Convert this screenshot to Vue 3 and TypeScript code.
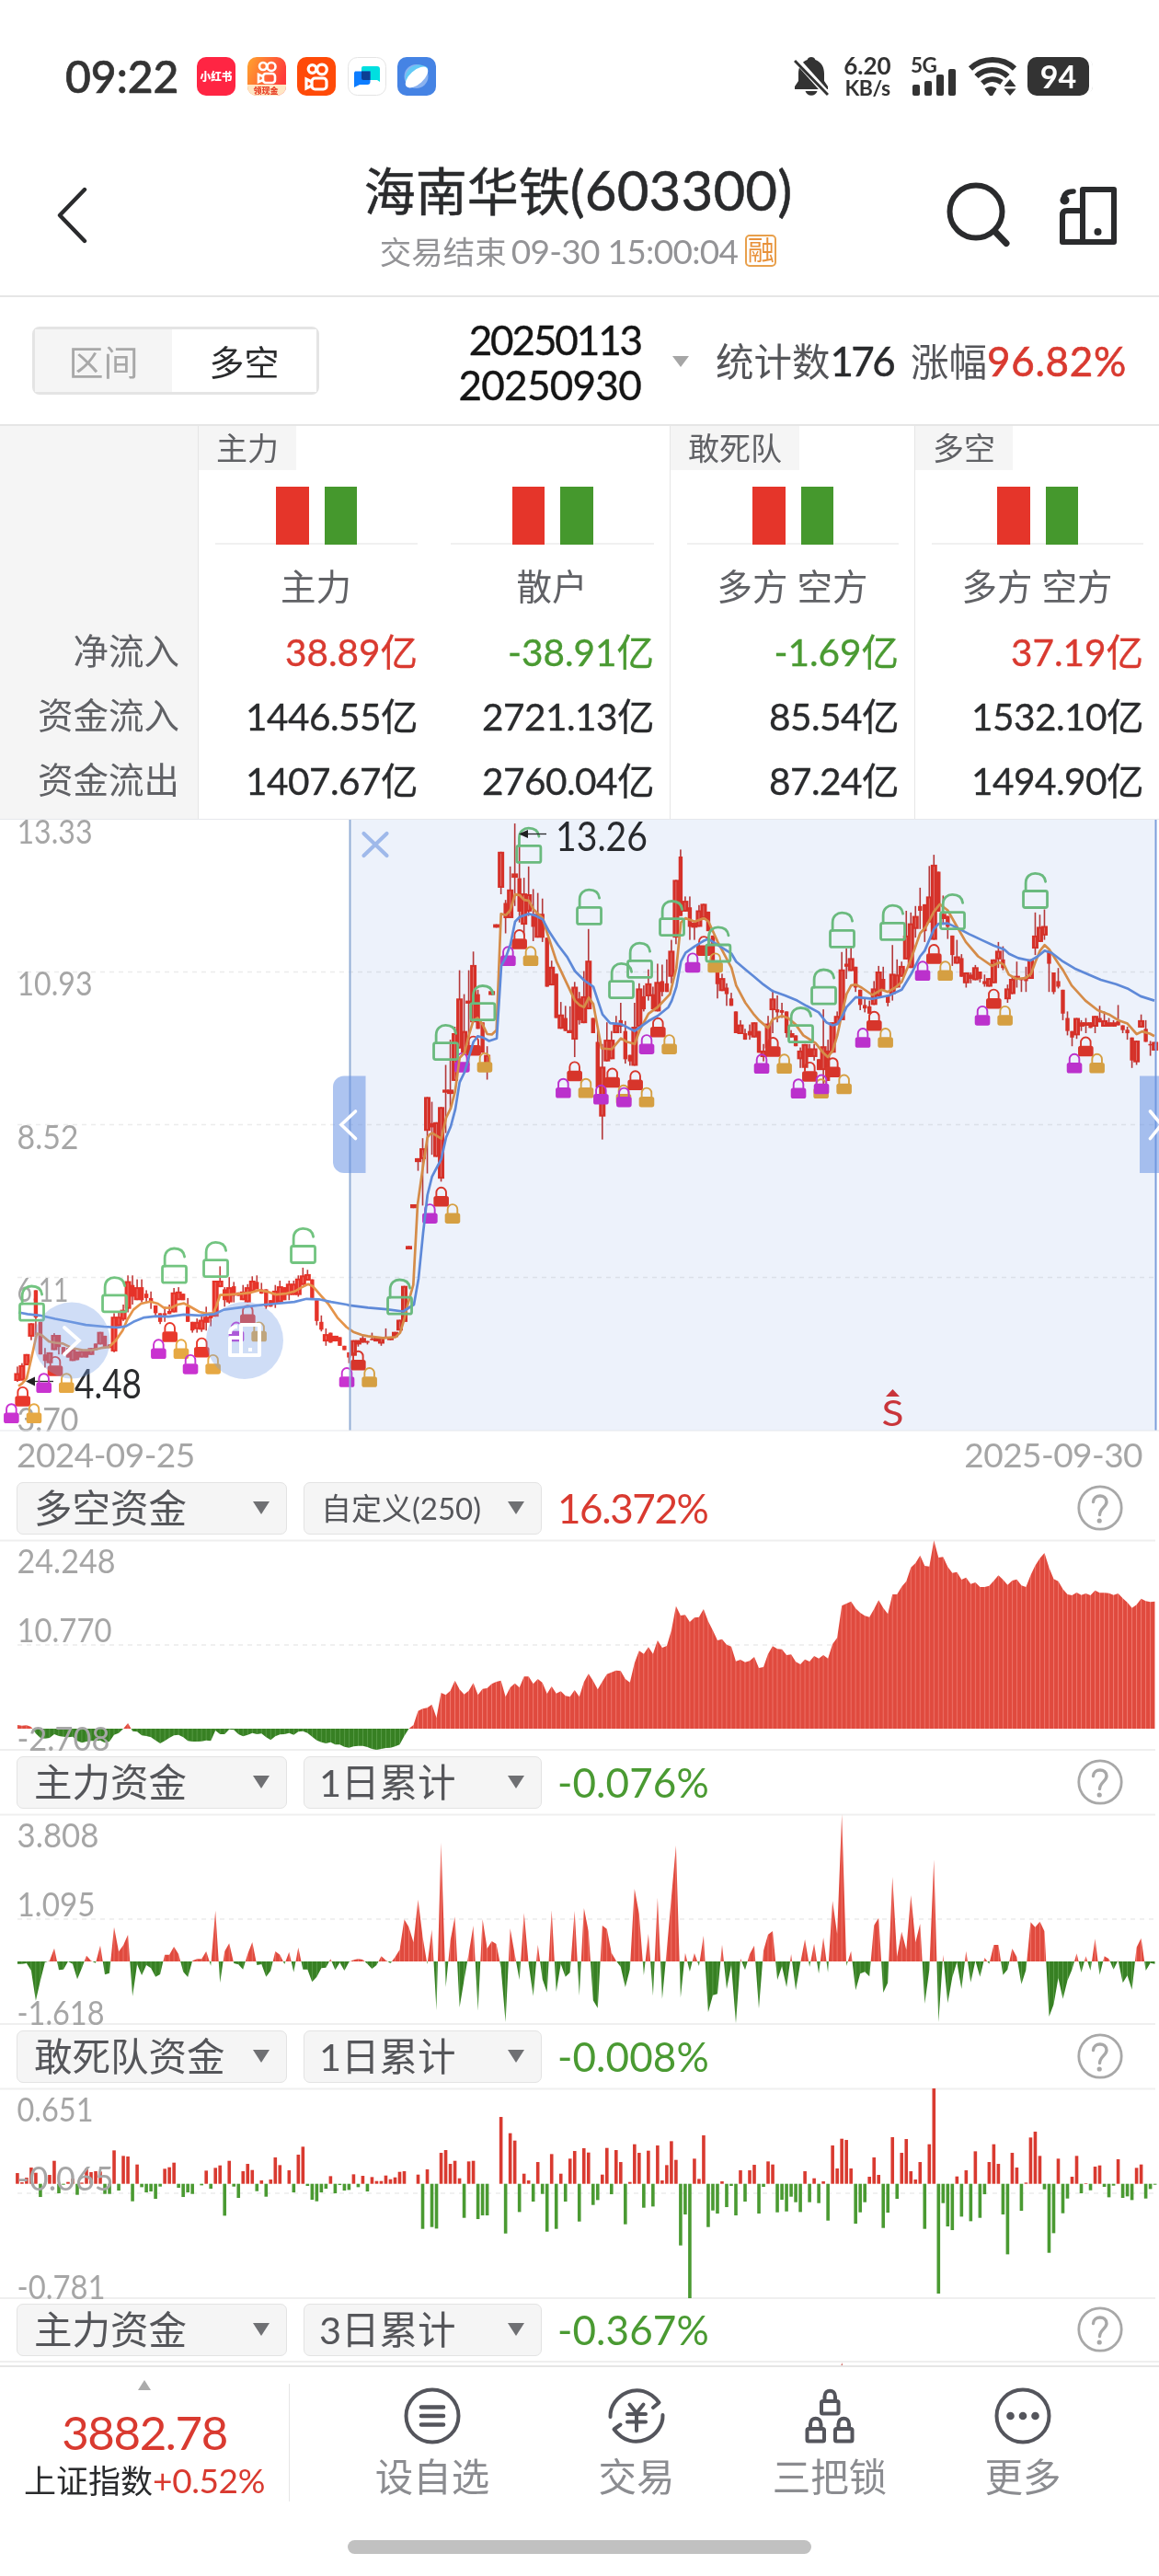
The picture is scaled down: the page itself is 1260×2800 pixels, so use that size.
<script setup lang="ts">
const STEP = 5.007
const X0 = 18.9
const px = (i: number) => X0 + i * STEP

/* ---------- price chart ---------- */
const PY = 0.4719
const ky = (v: number) => +(880 + v * PY).toFixed(1)

/* One entry per day: top,bottom,high,low ("w" marks a wide body). */
const candleSource = `
w1298,1316,1283,1318 w1280,1315,1275 w1254,1280 w1183,1214,0,1222 1107,1170,0,1210 1180,1255 1255,1270,1240,1285 w1250,1275 w1210,1245,1206 1210,1238,0,1255
1238,1255 1240,1262 w1243,1270 1248,1268 w1247,1262 1247,1262 w1240,1256 1230,1245 w1203,1232 1212,1240 1232,1240 w1168,1248,1160,1250 w1168,1190,1155 w1152,1175,1140,1178 w1086,1150,1073,1158
1095,1122,1073,1140 w1100,1130,1082 1100,1130,1082,1135 1115,1125,1107,1135 1125,1135,1110,1150 1142,1160,0,1170 1160,1180,0,1185 1160,1165,1145,1180 1155,1162,1140 w1112,1158,1102 w1110,1130,1100 1115,1130 1145,1180,1125 1180,1200,0,1205 w1180,1197,1172,1205
w1175,1198,1165,1203 w1168,1182,1145,1200 1165,1172,0,1190 w1085,1168 w1085,1100,1052 1105,1130,1100,1145 w1100,1135,1077,1138 1098,1120,1088,1135 1112,1120 w1110,1130,1095 w1100,1135,1093 w1085,1110,1075 1088,1105,1073 1105,1115,1090 1105,1145,0,1150
1130,1145 w1108,1140,1095,1148 w1098,1135,1085 1100,1130 w1092,1118,1085,1130 w1092,1118,1085 w1080,1118,1073,1122 w1073,1095,1055 w1070,1085,1060 1082,1125 1130,1178,0,1188 1180,1198,1165,1202 w1208,1225,1195,1235 1205,1228 w1212,1225
1215,1235 1235,1245 1250,1262,0,1275 w1222,1258 w1222,1232,0,1237 w1217,1228,1212 1224,1228,0,1232 1219,1222,1205 w1215,1225 w1215,1230,0,1235 1214,1217,1195 w1215,1222 w1203,1215 w1175,1200 w1097,1180
w1005,1013 w909,918 w803,812,0,832 w780,805,757,912 w662,740,0,838 w722,732,673,795 w720,800 w685,850,0,857 w645,652,588,745 w645,655,530,690 w515,625,500 w435,550,370 w510,560,425 w440,447,370,590 w358,490,327
425,505,415 490,560 w565,600,545,622 w418,427 w264,272 w97,180,0,195 215,250,208,285 w184,250,131 w147,157,32,222 158,235,85,260 w193,265,157,290 w195,235,131,245 240,270,183,303 w240,295,192 240,295,205,305
295,408 w362,405,348 378,480 w472,505,443 480,510,452 w508,515,453 w408,530,397,570 435,485,420,495 w430,492,372 w348,460,275 480,515 535,640,500 w592,707,540,760 w530,580,490 w530,575,510
w495,515,475 485,500,445,515 510,575,487,585 565,580,0,590 w500,590,445 w412,500,400 430,460,405,465 w400,430,368,440 425,460,408 w397,465,355 395,420,357,430 400,420,345 w325,385,300,400 w162,295,0,310 108,245,92
w210,235,200 225,270,200,300 w260,272,0,300 w232,270,220 w217,250 235,280 290,350 375,402,350,435 w388,418,378 410,425,400,452 435,452,422 465,515 w495,517,485 515,530,505 510,520,495,530
w490,525 510,560 w555,570,540,580 w493,550,475 w435,462,415,515 460,467,428,490 462,468,445,480 465,515,0,525 w515,525,508 520,545 w555,575,548,595 w540,595 550,570,540 w550,570,540,578 575,600
w545,600,460,632 555,625,530 w490,560 w475,495,465 w368,485,328 355,362,320,390 w342,372,318 362,410,0,420 415,450,0,462 450,458,435,467 453,470,440 w412,450,395 w373,430,360 390,415,362 430,445,0,453
w378,425,312,440 w380,410,345 w360,385,350 w290,345,233 w262,365,237 w245,275,222,295 222,233,180,275 218,280,0,305 w200,260,130 w127,300,104 143,235 w240,252,198,265 245,270,0,298 290,335,0,360 w338,355,300
342,385,333 w375,400,0,410 380,390,375,400 w363,393,358 373,390,0,398 395,402,380,408 w388,408 w345,400 w325,345,305,365 345,365,315,370 w412,437,403,445 w390,425,385 w383,390,350,410 388,393,0,420 385,395,362,420
w345,390 w290,320,237,335 w270,305,242 w268,290,230,300 325,355,0,420 375,420,0,425 395,408,365,412 415,470,0,485 480,510,465,520 510,525,0,545 w480,520,0,528 w490,500,485,510 w490,498,480,515 490,503 w475,500,0,515
480,490,452 w485,500,465 490,500,480 w490,500,485 487,497,450 497,508,0,515 507,515,500,530 525,578,0,595 w532,582,0,588 w485,502,472 505,535,485 540,543,533,567 w535,555`
const candles = candleSource.trim().split(/\s+/).map((s, i) => {
  const wide = s[0] === 'w'
  const [t, b, h, l] = s.replace('w', '').split(',').map(Number)
  const w = wide ? 7 : 4.4
  return {
    x: px(i),
    left: px(i) - w / 2,
    w,
    top: ky(t),
    h: Math.max(1.5, (b - t) * PY),
    hi: ky(h || t),
    lo: ky(l || b),
    gap: wide && b - t > 14,
  }
})

const line = (src: string) =>
  src.trim().split(/\s+/).map((p) => {
    const [x, y] = p.split(',').map(Number)
    return `${(x / 3).toFixed(1)},${ky(y)}`
  }).join(' ')
const shift = (src: string, dx: number) =>
  src.trim().split(/\s+/).map((p) => {
    const [x, y] = p.split(',').map(Number)
    return `${x + dx},${y}`
  }).join(' ')

const fastLine = [
  line('60,1328 72,1322 87,1310 102,1265 120,1207 135,1210 160,1225 180,1228 205,1230 235,1240 270,1245 300,1245 330,1240 355,1238 375,1225 400,1200 415,1175 435,1152 460,1138 490,1133 515,1138 535,1148 560,1147 580,1140 600,1137 620,1145 650,1157 675,1161 695,1160 705,1145 718,1118 750,1117 790,1115 820,1112 845,1107 870,1110 900,1117 930,1115 960,1110 985,1100 1005,1093 1020,1098 1045,1118 1070,1138 1100,1170 1130,1192'),
  line(shift('12,1203 40,1210 60,1213 110,1217 150,1215 165,1205 178,1175 190,1140 208,1095 222,910 240,820 254,755 262,748 270,745 299,758 315,710 330,688 344,650 359,572 375,560 389,520 404,485 418,480 434,495 449,517 464,518 479,508 494,240 510,243 524,232 540,195 555,197 570,208 585,210 600,230 630,250 645,285 675,350 705,395 735,440 750,450 765,455 780,433 795,448 810,505 822,550 855,552 885,527 905,535 930,540 945,510 975,470 1005,455 1045,425 1066,365 1081,260 1096,250 1126,258 1156,250 1171,258 1201,305 1246,365 1261,405 1291,445 1320,473', 1140)),
  line(shift('15,485 45,503 60,483 90,475 110,480 135,495 160,520 200,538 225,560 240,570 256,555 271,520 286,470 301,425 316,405 331,403 350,410 385,427 415,415 436,420 460,410 481,397 511,345 541,285 560,270 586,235 605,218 631,232 660,268 690,305 730,338 775,360 800,352 815,358 830,380 855,390 885,388 903,378 917,350 932,325 947,312 962,322 992,355 1007,370 1035,405 1080,440 1120,462 1157,472 1187,485 1217,493 1247,517 1265,511 1290,516 1305,522', 2460)),
].join(' ')
const slowLine = [
  line('60,1158 90,1162 130,1165 180,1173 230,1180 280,1187 340,1191 385,1193 410,1190 435,1180 470,1170 510,1167 550,1168 600,1163 650,1165 700,1162 730,1152 780,1147 840,1142 900,1138 960,1134 1000,1127 1040,1128 1080,1134 1130,1140'),
  line(shift('0,1142 60,1147 120,1151 175,1156 210,1140 225,1080 240,975 254,888 269,845 299,805 315,755 330,730 345,690 359,628 375,605 389,570 404,535 418,522 435,525 455,533 480,527 495,360 510,340 525,310 540,258 555,247 585,240 605,244 630,253 650,280 680,312 710,340 735,372 765,393 795,408 810,440 825,472 850,492 885,494 930,510 975,487 1005,475 1040,455 1051,440 1066,408 1081,350 1096,330 1126,315 1156,302 1171,298 1201,312 1246,332 1261,350 1291,368', 1140)),
  line(shift('0,385 30,403 60,418 100,428 140,440 170,452 210,467 235,490 256,497 271,494 286,478 301,455 331,432 385,436 440,428 481,415 511,380 541,338 556,325 586,275 601,263 631,262 661,272 701,287 741,300 781,313 815,322 831,332 861,342 901,348 925,338 947,325 970,330 1007,350 1045,366 1090,380 1130,392 1180,402 1217,412 1260,430 1305,440', 2460)),
].join(' ')

const spots = (list: number[][]) => list.map(([x, y]) => ({ x: x / 3, y: ky(y) }))
const lockGroups = spots([
  [74, 1328], [180, 1258], [554, 1180], [658, 1215], [808, 1140], [1168, 1245],
  [1439, 868], [1544, 520], [1694, 275], [1874, 579], [1997, 594], [2072, 600], [2146, 478], [2296, 290],
  [2521, 523], [2641, 580], [2716, 570], [2851, 463], [3046, 309], [3241, 412], [3541, 522],
])
const lockParts = [
  { dx: 0, dy: 0, c: '#e8382b' },
  { dx: 12.3, dy: 18.3, c: '#e6a843' },
  { dx: -12.3, dy: 18.3, c: '#c933d0' },
]
const openLocks = spots([
  [103, 1095], [373, 1075], [568, 1008], [703, 994], [988, 962],
  [1303, 1080], [1453, 494], [1574, 403], [1724, 40], [1921, 182], [2026, 352], [2086, 305], [2191, 208], [2342, 268],
  [2611, 454], [2686, 366], [2746, 235], [2911, 218], [3106, 193], [3376, 144],
])
const priceLabels = [
  { t: '13.33', y: 916.5, w: 82 },
  { t: '10.93', y: 1082, w: 82 },
  { t: '8.52', y: 1249, w: 67 },
  { t: '6.11', y: 1415, w: 56 },
  { t: '3.70', y: 1556, w: 67 },
]

/* ---------- indicator panels (values in thirds of a pixel) ---------- */
const nums = (s: string) => s.trim().split(/\s+/).map(Number)
const total = nums(`12 10 11 6 -16 -30 -32 -30 -18 -24 -26 -28 -26 -40 -46 -42 -40 -40 -38 -46 -42 -20 -14 0 18 -8 -10 -22 -24 -28 -38 -48 -40 -30 -22 -20 -28 -40 -42 -42 -41 -38 -40 -6 -18 -18 -2 -4 -18 -25 -20 -14 -18 -16 -28 -37 -25 -19 -18 -14 -20 -10 -8 -14 -26 -38 -44 -48 -44 -52 -52 -59 -62 -58 -56 -56 -60 -66 -69 -66 -63 -62 -58 -52 -24 0 12 58 65 68 79 36 117 110 124 157 128 112 124 149 110 130 132 146 153 157 104 134 148 134 170 170 146 162 150 114 138 115 122 107 104 126 104
152 179 156 128 154 178 184 190 188 162 151 214 254 244 266 244 288 264 270 320 400 369 371 348 362 364 390 350 320 288 292 274 268 220 225 217 221 234 198 201 244 269 260 259 240 242 218 210 226 219 237 229 240 229 276 296 401 408 415 392 378 368 364 390 419 394 374 438 438 463 481 526 540 565 531 529 614 558 560 528 508 511 486 493 472 477 462 462 466 482 500 486 469 483 487 467 462 500 532 556 573 525 488 481 455 438 435 444 436 441 435 451 443 443 442 436 441 425 412 394 404 424 416 413 415`)
const main = nums(`-8 -8 -6 -30 -128 -62 -3 2 43 -28 -26 0 -8 -58 -22 19 2 -5 52 -43 -38 112 32 53 87 -113 -10 -45 -12 -22 -50 -42 22 22 48 24 -34 -51 2 8 8 33 -14 166 -70 33 59 -6 -10 -26 25 63 -12 -9 -50 -30 33 22 -9 31 -35 46 -26 -26 -67 -50 -22 -20 8 -28 -4 -30 -2 5 8 6 -8 -24 -12 17 4 -6 14 38 137 112 62 202 80 -10 104 -160 388 -84 68 146 -150 -60 26 117 -161 138 42 66 57 -20 -198 108 22 -60 158 -8 -113 55 -58 -101 167 -99 -8 -50 -36 165 -112
174 98 -127 -152 117 106 28 2 -18 -84 -26 237 155 -45 90 -112 208 -122 38 210 378 -118 28 -33 27 -15 84 -166 -110 -106 55 -90 -12 -202 10 -28 24 52 -154 35 88 99 -60 -16 -84 24 -94 -5 72 -18 58 -40 78 -36 197 90 480 -15 34 -94 -40 -34 -49 118 142 -102 -70 276 16 97 38 216 62 123 -138 -28 332 -198 22 -136 -52 -2 -90 34 -68 2 -50 12 -8 54 54 -44 -26 42 14 -74 -28 128 112 130 98 -180 -140 -54 -122 -62 -26 26 -36 17 -30 74 -44 17 8 -26 4 -70 -46 -92 46 76 -30 -5 -8`)
const squad = nums(`35 5 20 53 36 -43 -1 29 75 -31 -3 6 17 -36 4 50 38 41 40 -33 -33 109 -22 91 89 -57 63 -11 -28 -25 -49 -9 49 54 69 -13 -43 -28 -33 0 -5 43 -16 52 60 -104 75 -9 -46 41 65 45 -24 11 -42 14 86 61 0 44 -28 95 121 -7 -52 -57 -28 -16 25 -31 -4 -22 -20 31 -11 26 -25 22 9 9 27 15 21 39 41 0 0 30 -147 47 -141 -146 101 110 65 75 18 -111 73 75 -115 -103 -103 0 0 218 -162 165 141 -92 33 11 -58 71 -33 -156 97 -147 33 -58 82 107 -123
116 102 -69 -53 30 117 -34 110 71 -132 6 129 101 -78 108 -74 125 11 61 139 78 -201 -100 -373 82 16 158 -141 -87 -97 8 -76 -7 -103 44 -58 44 62 -97 -10 73 63 -93 -52 -90 -42 -60 -92 41 -60 18 -63 8 -120 125 50 147 143 50 -130 -93 -60 23 86 29 -144 -94 152 -49 101 146 41 14 71 -147 129 311 -358 -63 -139 -151 24 -107 44 -122 106 -111 -34 71 129 65 -100 -230 101 53 -88 4 151 170 91 -18 -225 -161 82 -96 -48 23 91 -31 2 -21 56 60 -10 -44 -6 80 -46 -41 -53 52 63 -48 -17 -3`)

const area = (values: number[], base: number) =>
  `M${px(0)},${base} ` +
  values.map((v, i) => `L${px(i).toFixed(1)},${(base - v / 3).toFixed(1)}`).join(' ') +
  ` L${px(values.length - 1).toFixed(1)},${base} Z`
const bars = squad.map((v, i) => ({ x: px(i) - 1.8, y: v > 0 ? 103.7 - v / 3 : 103.7, h: Math.abs(v) / 3, up: v > 0 }))

interface Panel {
  name: string
  period: string
  small?: boolean
  value: string
  up?: boolean
  base: number
  d?: string
  grid: number
  labels: { t: string; y: number; w: number }[]
  last?: boolean
}
const panels: Panel[] = [
  {
    name: '多空资金', period: '自定义(250)', small: true, value: '16.372%', up: true, base: 205, d: area(total, 205), grid: 114,
    labels: [{ t: '24.248', y: 36, w: 107 }, { t: '10.770', y: 111, w: 103 }, { t: '-2.708', y: 229, w: 101 }],
  },
  {
    name: '主力资金', period: '1日累计', value: '-0.076%', base: 160, d: area(main, 160), grid: 114,
    labels: [{ t: '3.808', y: 36, w: 89 }, { t: '1.095', y: 111, w: 85 }, { t: '-1.618', y: 229, w: 95 }],
  },
  {
    name: '敢死队资金', period: '1日累计', value: '-0.008%', base: 103.7, grid: 114,
    labels: [{ t: '0.651', y: 36, w: 83 }, { t: '-0.065', y: 111, w: 105 }, { t: '-0.781', y: 229, w: 96 }],
  },
  { name: '主力资金', period: '3日累计', value: '-0.367%', base: 0, grid: 0, labels: [], last: true },
]

const flows = [
  { tag: '主力', name: '主力', net: '38.89亿', up: true, inflow: '1446.55亿', out: '1407.67亿', cls: 'c1' },
  { tag: '', name: '散户', net: '-38.91亿', up: false, inflow: '2721.13亿', out: '2760.04亿', cls: 'c2' },
  { tag: '敢死队', name: '多方 空方', net: '-1.69亿', up: false, inflow: '85.54亿', out: '87.24亿', cls: 'c3' },
  { tag: '多空', name: '多方 空方', net: '37.19亿', up: true, inflow: '1532.10亿', out: '1494.90亿', cls: 'c4' },
]
</script>

<template>
  <div class="screen">
    <div class="status">
      <span class="clock">09:22</span>
      <div class="apps">
        <svg width="42" height="42" viewBox="0 0 42 42"><rect width="42" height="42" rx="10" fill="#ff2543" /><text x="21" y="26" text-anchor="middle" font-size="12.5" font-weight="900" fill="#fff" textLength="35" lengthAdjust="spacingAndGlyphs">小红书</text></svg>
        <svg width="42" height="42" viewBox="0 0 42 42"><defs><linearGradient id="ks" x1="0" y1="0" x2="1" y2=".4"><stop offset="0" stop-color="#ffa52e" /><stop offset="1" stop-color="#ff3a3a" /></linearGradient></defs><rect width="42" height="42" rx="10" fill="url(#ks)" /><g fill="none" stroke="#fff" stroke-width="2.6"><circle cx="17" cy="10" r="4" /><circle cx="26" cy="10.500" r="4.500" /><rect x="17" y="18" width="13" height="10" rx="3" /><path d="M17 21l-5-2v8l5-2" /></g><path d="M0 30h42v2a10 10 0 0 1-10 10H10A10 10 0 0 1 0 32z" fill="#ffe6c4" /><text x="20" y="40" text-anchor="middle" font-size="9" font-weight="900" fill="#e8452c">领现金</text></svg>
        <svg width="42" height="42" viewBox="0 0 42 42"><rect width="42" height="42" rx="10" fill="#ff4a08" /><g fill="none" stroke="#fff" stroke-width="3.200"><circle cx="16.500" cy="13" r="4.300" /><circle cx="27" cy="13.500" r="5.300" /><rect x="16" y="23" width="16" height="12" rx="3.500" /><path d="M16 27l-6-3v10l6-3" /></g></svg>
        <svg width="42" height="42" viewBox="0 0 42 42"><rect x=".5" y=".5" width="41" height="41" rx="10" fill="#fff" stroke="#e4e4e4" /><path d="M17 10h15a3 3 0 0 1 3 3v14l-3-2H17a2 2 0 0 1-2-2V12a2 2 0 0 1 2-2z" fill="#00dfe0" /><path d="M8 15.500h16.500V27a3 3 0 0 1-3 3H13l-6 3V17z" fill="#0d7dff" /><path d="M15 15.500h9.500V25H17a2 2 0 0 1-2-2z" fill="#0b3f94" /></svg>
        <svg width="42" height="42" viewBox="0 0 42 42"><rect width="42" height="42" rx="10" fill="#4583e4" /><circle cx="20.500" cy="21" r="13" fill="#8ab2f0" /><path d="M10 29C5 17 16 6 27 9c5 1 7 3 6 5z" fill="#62c9f5" /><ellipse cx="21" cy="22" rx="15" ry="7.500" transform="rotate(-42 21 22)" fill="#fff" /></svg>
      </div>
      <div class="sys">
        <svg class="bell" width="38" height="44" viewBox="0 0 38 44"><path d="M19 1c2 0 4 1.200 4.400 3C30 6.500 33 12 33 19v8l4 6v3H1v-3l4-6v-8C5 12 8 6.500 14.600 4 15 2.200 17 1 19 1zM12.500 38h13c-1 3-3.500 4.800-6.500 4.800S13.500 41 12.500 38z" fill="#333" /><path d="M2 3l34 38" stroke="#fff" stroke-width="7" /><path d="M1 5l36 37" stroke="#333" stroke-width="3" /></svg>
        <div class="speed"><span>6.20</span><span>KB/s</span></div>
        <div class="cell">
          <b>5G</b>
          <svg width="52" height="44" viewBox="0 0 52 44"><g fill="#333"><rect x="2" y="31" width="8" height="12" rx="2" /><rect x="15" y="27" width="8" height="16" rx="2" /><rect x="28" y="20" width="8" height="23" rx="2" /><rect x="41" y="14" width="8" height="29" rx="2" /></g></svg>
        </div>
        <svg class="wifi" width="54" height="44" viewBox="0 0 54 44"><g fill="none" stroke="#333" stroke-width="6"><path d="M3 13.500C16 .8 38 .8 51 13.500" /><path d="M9.500 22C19 12.500 34 12.500 43.500 22" /><path d="M16 29.500c6.500-5.500 14.500-5.500 21-1" /></g><path d="M18.500 35.500c4-3.500 10-3.500 13 0L27 43h-3z" fill="#333" /><path d="M46 25l6.500 8h-13zM46 43l-6.500-7.500h13z" fill="#333" /></svg>
        <div class="battery"><b>94</b></div>
      </div>
    </div>

    <header class="head">
      <svg class="back" width="34" height="62" viewBox="0 0 34 62"><path d="M31 3L4 31l27 28" fill="none" stroke="#2a2b2d" stroke-width="4.400" stroke-linecap="round" stroke-linejoin="round" /></svg>
      <div class="titles">
        <div class="title">海南华铁<i>(603300)</i></div>
        <div class="sub"><span>交易结束</span><em>09-30 15:00:04</em><b>融</b></div>
      </div>
      <div class="acts">
        <svg width="72" height="72" viewBox="0 0 72 72"><circle cx="33" cy="33" r="28.500" fill="none" stroke="#2a2b2d" stroke-width="6" /><path d="M54 55l12 12.500" stroke="#2a2b2d" stroke-width="7" stroke-linecap="round" /></svg>
        <svg width="66" height="68" viewBox="0 0 66 68"><g fill="none" stroke="#2a2b2d" stroke-width="6" stroke-linejoin="round"><path d="M27 28V5h34v57H5V33q0-5 5-5h17zV62" /></g><path d="M6 17c0-7 4-10 11-10" fill="none" stroke="#2a2b2d" stroke-width="5.500" stroke-linecap="round" /><circle cx="7.500" cy="16.500" r="5" fill="#2a2b2d" /><circle cx="43.500" cy="51" r="4" fill="#2a2b2d" /></svg>
      </div>
    </header>

    <div class="tools">
      <div class="seg"><span>区间</span><span class="on">多空</span></div>
      <div class="dates"><span class="d1">20250113</span><span>20250930</span></div>
      <i class="caret"></i>
      <div class="stat">统计数<b>176</b></div>
      <div class="stat">涨幅<strong>96.82%</strong></div>
    </div>

    <section class="flow">
      <div class="side"><span>净流入</span><span>资金流入</span><span>资金流出</span></div>
      <div v-for="f in flows" :key="f.cls" class="col" :class="f.cls">
        <div class="tagrow"><span v-if="f.tag" class="tag">{{ f.tag }}</span></div>
        <div class="pair"><i class="r"></i><i class="g"></i></div>
        <div class="nm">{{ f.name }}</div>
        <div class="v net" :class="f.up ? 'red' : 'green'">{{ f.net }}</div>
        <div class="v">{{ f.inflow }}</div>
        <div class="v">{{ f.out }}</div>
      </div>
    </section>

    <svg class="kline" width="1260" height="665" viewBox="0 890 1260 665">
      <defs>
        <g id="openlock" fill="none" stroke="#72c480" stroke-width="2.800">
          <rect x="-12.800" y="20.500" width="26" height="18" rx="2" />
          <path d="M-10.200 20.500V12C-10.200 4.500-5 1.300 0 1.300c6 0 10.500 3 11.300 9" stroke-linecap="round" />
        </g>
      </defs>
      <g stroke="#ececec" stroke-width="1.500" stroke-dasharray="5 5"><path d="M19 1056.500H1256M19 1222.500H1256M19 1388.500H1256" /></g>
      <g class="axis"><text v-for="l in priceLabels" :key="l.t" x="18.500" :y="l.y" :textLength="l.w" lengthAdjust="spacingAndGlyphs">{{ l.t }}</text></g>
      <g fill="#e63329">
        <template v-for="(c, i) in candles" :key="i">
          <rect :x="c.x - 0.8" :y="c.hi" width="1.600" :height="Math.max(1, c.lo - c.hi)" fill="#c23b3b" />
          <rect :x="c.left" :y="c.top" :width="c.w" :height="c.h" />
          <rect v-if="c.gap" :x="c.x - 0.4" :y="c.top + 2" width="0.800" :height="c.h - 4" fill="#f0847c" />
        </template>
      </g>
      <text x="81" y="1519.500" class="tip" textLength="73" lengthAdjust="spacingAndGlyphs">4.48</text>
      <path d="M58 1501.500H30" stroke="#2a2b2d" stroke-width="1.300" /><path d="M28 1501.500l10-5v10z" fill="#222" />
      <g v-for="(g, i) in lockGroups" :key="'g' + i">
        <g v-for="p in lockParts" :key="p.c" :transform="`translate(${g.x + p.dx} ${g.y + p.dy})`">
          <path d="M-5.300 11V6.500a5.300 5.300 0 0 1 10.600 0V11" fill="none" :stroke="p.c" stroke-width="1.900" />
          <rect x="-8.300" y="10.500" width="16.600" height="11.500" rx="2.600" :fill="p.c" />
        </g>
      </g>
      <polyline :points="fastLine" fill="none" stroke="#e5944a" stroke-width="2.700" stroke-linejoin="round" />
      <polyline :points="slowLine" fill="none" stroke="#6590dc" stroke-width="2.700" stroke-linejoin="round" />
      <use v-for="(o, i) in openLocks" :key="'o' + i" href="#openlock" :x="o.x" :y="o.y" />
      <text x="604" y="924.500" class="tip" textLength="100" lengthAdjust="spacingAndGlyphs">13.26</text>
      <path d="M594 906.500H566" stroke="#2a2b2d" stroke-width="1.300" /><path d="M564 906.500l10-4.500v9z" fill="#222" />
      <rect class="range-fill" x="380" y="890" width="877" height="665" fill="#edf2fb" />
      <g stroke="#93aed6" stroke-width="2"><path d="M380.500 890v665" /><path d="M1256.500 890v665" stroke="#7c9ddb" /></g>
      <path d="M397.500 1169.500H374a12 12 0 0 0-12 12v81.500a12 12 0 0 0 12 12h23.500z" fill="#6a94e3" fill-opacity=".55" />
      <rect x="1239" y="1169.500" width="21" height="105.500" fill="#6a94e3" fill-opacity=".55" />
      <g fill="none" stroke="#fff" stroke-width="3.600" stroke-linecap="round"><path d="M386.500 1208L371 1222.500l15.500 15" /><path d="M1250.500 1208l12 14.500-12 15" /></g>
      <path d="M395.500 906l25 24M420.500 906l-25 24" stroke="#9fb9ea" stroke-width="4.200" stroke-linecap="round" />
      <g fill="#7aa0e6" fill-opacity=".36"><circle cx="78" cy="1457" r="41.500" /><circle cx="266" cy="1457" r="42" /></g>
      <path d="M70 1443l16 14-16 15" fill="none" stroke="#fff" stroke-width="3.800" stroke-linecap="round" />
      <g fill="none" stroke="#fff" stroke-width="4"><path d="M262 1440h20v33h-32v-19h12zM262 1440v33M250 1450c0-6 3-8 8-8" stroke-linejoin="round" /><path d="M270 1467h4" /></g>
      <path d="M963 1518l7.500-8 7.500 8z" fill="#c9353a" />
      <text x="970.500" y="1549.500" text-anchor="middle" font-size="39" fill="#c9353a" textLength="24" lengthAdjust="spacingAndGlyphs">S</text>
      <path d="M0 890.500H1260M0 1555H1260" stroke="#e6e8ec" stroke-width="1.200" />
    </svg>
    <div class="range"><span>2024-09-25</span><span class="end">2025-09-30</span></div>

    <section v-for="(p, k) in panels" :key="k" class="panel" :class="{ last: p.last }">
      <div class="bar">
        <div class="sel s1"><span>{{ p.name }}</span><i></i></div>
        <div class="sel s2" :class="{ small: p.small }"><span>{{ p.period }}</span><i></i></div>
        <span class="pct" :class="p.up ? 'red' : 'green'">{{ p.value }}</span>
        <svg class="help" width="52" height="52" viewBox="0 0 52 52"><circle cx="26" cy="26" r="23.200" fill="none" stroke="#a8a8a8" stroke-width="2.800" /><path d="M18.500 19.500c.5-9 14.500-8.500 14.500 0 0 5.500-7.500 7-7.500 14" fill="none" stroke="#a8a8a8" stroke-width="3.400" stroke-linecap="round" /><circle cx="25.200" cy="40" r="2.600" fill="#a8a8a8" /></svg>
      </div>
      <svg v-if="!p.last" class="plot" width="1260" height="228" viewBox="0 0 1260 228">
        <defs>
          <clipPath :id="'u' + k"><rect x="0" y="0" width="1260" :height="p.base" /></clipPath>
          <clipPath :id="'d' + k"><rect x="0" :y="p.base" width="1260" :height="228 - p.base" /></clipPath>
          <pattern :id="'r' + k" :x="X0 - 0.5" y="0" :width="STEP" height="10" patternUnits="userSpaceOnUse"><rect width="6" height="10" fill="#e04a3e" /><rect width=".9" height="10" fill="#ef776d" /></pattern>
          <pattern :id="'n' + k" :x="X0 - 0.5" y="0" :width="STEP" height="10" patternUnits="userSpaceOnUse"><rect width="6" height="10" fill="#378023" /><rect width=".9" height="10" fill="#5a9d49" /></pattern>
        </defs>
        <path :d="`M19 ${p.grid}H1256`" stroke="#ececec" stroke-width="1.500" stroke-dasharray="5 5" />
        <path d="M0 .5H1256M0 228H1256" stroke="#efefef" stroke-width="2" />
        <template v-if="p.d">
          <path :d="p.d" :fill="`url(#r${k})`" :clip-path="`url(#u${k})`" />
          <path :d="p.d" :fill="`url(#n${k})`" :clip-path="`url(#d${k})`" />
        </template>
        <template v-else>
          <rect v-for="(b, i) in bars" :key="i" :x="b.x" :y="b.y" width="3.600" :height="b.h" :fill="b.up ? '#d93a30' : '#4a9a32'" />
        </template>
        <g class="axis"><text v-for="l in p.labels" :key="l.t" x="18.500" :y="l.y" :textLength="l.w" lengthAdjust="spacingAndGlyphs">{{ l.t }}</text></g>
      </svg>
    </section>
    <svg class="peek" width="1260" height="3" viewBox="0 0 1260 3"><path d="M914.500 3L915.300 0 916 3z" fill="#c9554d" /></svg>

    <nav class="nav">
      <div class="index">
        <i></i>
        <b>3882.78</b>
        <span>上证指数<em>+0.52%</em></span>
      </div>
      <div class="item n1">
        <svg width="64" height="64" viewBox="0 0 64 64"><circle cx="32" cy="32" r="28.500" fill="none" stroke="#54555c" stroke-width="4" /><path d="M20 22.500h24M20 32h24M20 41.500h24" stroke="#54555c" stroke-width="4.600" stroke-linecap="round" /></svg>
        <span>设自选</span>
      </div>
      <div class="item n2">
        <svg width="64" height="64" viewBox="0 0 64 64"><g fill="none" stroke="#54555c" stroke-width="4" stroke-linecap="round" stroke-linejoin="round"><path d="M3.500 33C2.500 10 36-10 56.500 17.500L50 23" /><path d="M60.500 31C61.500 54 28 74 7.500 46.500l7-5" /><path d="M24.500 19.500L32 29l7.500-9.500M32 29v19M22 30h20M22 38.500h20" /></g></svg>
        <span>交易</span>
      </div>
      <div class="item n3">
        <svg width="64" height="64" viewBox="0 0 64 64"><g fill="none" stroke="#54555c" stroke-width="4"><rect x="23" y="16" width="18.500" height="13.500" rx="1.500" /><path d="M26.500 16v-5c0-8.500 11.500-8.500 11.500 0v5" /><rect x="7.500" y="46" width="18.500" height="13.500" rx="1.500" /><path d="M11 46v-5c0-8.500 11.500-8.500 11.500 0v5" /><rect x="38" y="46" width="18.500" height="13.500" rx="1.500" /><path d="M41.500 46v-5c0-8.500 11.500-8.500 11.500 0v5" /></g></svg>
        <span>三把锁</span>
      </div>
      <div class="item n4">
        <svg width="64" height="64" viewBox="0 0 64 64"><circle cx="32" cy="32" r="28.500" fill="none" stroke="#54555c" stroke-width="4" /><g fill="#54555c"><circle cx="18.500" cy="32" r="4.300" /><circle cx="32" cy="32" r="4.300" /><circle cx="45.500" cy="32" r="4.300" /></g></svg>
        <span>更多</span>
      </div>
    </nav>
    <div class="home"></div>
  </div>
</template>

<style>
body { margin: 0; background: #fff; }
</style>

<style scoped>
.screen { width: 1260px; height: 2800px; overflow: hidden; background: #fff; font-family: Lato, "Noto Sans CJK SC", sans-serif; color: #2a2b2d; display: flex; flex-direction: column; }
.screen > * { flex: none; box-sizing: border-box; }
i, em { font-style: normal; }
b { font-weight: 400; }
.red { color: #d93a30 !important; }
.green { color: #4a9a32 !important; }

.status { height: 165px; padding: 1px 76px 0 71px; display: flex; align-items: center; color: #333; }
.clock { font-size: 48px; line-height: 56px; font-weight: 500; width: 143px; letter-spacing: 0; -webkit-text-stroke: .7px #333; }
.apps { display: flex; gap: 12.500px; }
.apps svg { display: block; }
.sys { margin-left: auto; display: flex; align-items: center; }
.speed { display: flex; flex-direction: column; width: 56px; margin-left: 14px; font-size: 26px; line-height: 24px; font-weight: 700; align-items: center; }
.speed span + span { font-size: 23px; letter-spacing: -.4px; }
.cell { margin-left: 19px; display: grid; }
.cell > * { grid-area: 1 / 1; display: block; }
.cell b { font-size: 22.500px; line-height: 20px; font-weight: 700; letter-spacing: -.5px; }
.wifi { margin-left: 10px; }
.battery { margin-left: 11px; width: 67px; height: 42px; border-radius: 10px; background: #333; color: #fff; display: flex; align-items: center; justify-content: center; box-shadow: 5px 0 0 -1px #fff, 7px 0 0 -3px #b4b4b4; }
.battery b { font-size: 34px; font-weight: 700; line-height: 42px; }

.head { height: 158px; border-bottom: 2px solid #e6e6e6; display: flex; justify-content: space-between; padding: 0 44px 0 61px; }
.back { margin-top: 38px; }
.titles { display: flex; flex-direction: column; align-items: center; padding-left: 134px; }
.title { font-size: 56px; line-height: 66px; margin-top: 8px; white-space: nowrap; -webkit-text-stroke: .5px #2a2b2d; }
.title i { font-size: 60px; letter-spacing: .1px; }
.sub { display: flex; align-items: center; margin-top: 11px; height: 40px; font-size: 34.500px; color: #939396; white-space: nowrap; }
.sub em { font-size: 37px; letter-spacing: -.7px; margin-left: 5px; }
.sub b { margin-left: 8px; width: 30px; height: 31px; border: 2px solid #e8a04c; border-radius: 5px; font-size: 29px; line-height: 30px; color: #e8913a; text-align: center; }
.acts { display: flex; gap: 50px; margin-top: 32px; }
.acts svg + svg { margin-top: 4px; }

.tools { height: 140px; border-bottom: 2px solid #e6e6e6; padding: 0 33px 0 35px; display: flex; align-items: center; }
.seg { box-sizing: border-box; width: 312px; height: 74px; margin-top: 0; border: 3px solid #e4e4e4; border-radius: 8px; display: flex; font-size: 38px; line-height: 70px; }
.seg span { width: 149px; background: #f5f5f5; color: #a8a8a8; text-align: center; }
.seg .on { flex: 1; width: auto; background: #fff; color: #2a2b2d; }
.dates { width: 350px; display: flex; flex-direction: column; align-items: flex-end; font-size: 44px; line-height: 49px; color: #151515; letter-spacing: -.7px; margin-top: 4px; -webkit-text-stroke: .4px #151515; }
.dates .d1 { letter-spacing: -2.100px; }
.caret { margin: 2px 30px 0 34px; border: 9px solid transparent; border-top: 12px solid #a6a6a6; border-bottom: 0; }
.stat { font-size: 41.500px; line-height: 60px; color: #55565a; white-space: nowrap; margin-right: 20px; margin-left: -1px; }
.stat b { font-size: 44px; letter-spacing: -2.700px; color: #2a2b2d; -webkit-text-stroke: .4px #2a2b2d; }
.stat strong { font-weight: 400; font-size: 44px; letter-spacing: .7px; color: #d93a30; -webkit-text-stroke: .6px #d93a30; }
.stat:last-child { margin-right: 0; }

.flow { height: 427px; display: flex; }
.side { box-sizing: border-box; width: 216px; background: #f5f5f5; padding: 209px 20px 0 0; border-right: 1px solid #e6e6e6; display: flex; flex-direction: column; align-items: flex-end; font-size: 38.500px; line-height: 70px; color: #606165; }
.col { box-sizing: border-box; width: 256px; display: flex; flex-direction: column; border-right: 1px solid transparent; }
.c2 { width: 257px; border-color: #e6e6e6; }
.c3 { width: 266px; border-color: #e6e6e6; }
.c4 { width: 265px; border: 0; }
.tagrow { height: 48px; font-size: 34px; line-height: 48px; color: #606165; }
.tag { display: inline-block; background: #f5f5f5; padding: 0 19px; }
.pair { height: 61px; margin: 18px 17px 0 18px; display: flex; justify-content: center; gap: 17px; border-bottom: 2px solid #f0f0f0; }
.pair i { width: 35.500px; height: 63px; }
.pair .r { background: #e5352a; }
.pair .g { background: #45982d; }
.nm { margin-top: 9px; height: 72px; text-align: center; font-size: 38.500px; line-height: 72px; color: #606165; }
.v { height: 70px; line-height: 70px; padding-right: 17px; text-align: right; font-size: 40.500px; letter-spacing: -.5px; color: #2a2b2d; -webkit-text-stroke: .35px; }
.net { margin-top: 1px; letter-spacing: 0; }

.kline, .plot { display: block; overflow: visible; }
.range-fill { mix-blend-mode: multiply; }
.axis text { font-size: 36.500px; fill: #a6a6a6; }
.tip { font-size: 45px; fill: #2a2b2d; }
.range { height: 49px; padding: 0 18px; display: flex; justify-content: space-between; font-size: 37px; line-height: 52px; color: #a6a6a6; letter-spacing: -.55px; }

.panel { height: 298px; }
.panel.last { height: 70px; }
.bar { height: 70px; display: flex; align-items: center; padding-left: 18px; }
.sel { box-sizing: border-box; height: 57px; border: 1.500px solid #e3e3e3; border-radius: 7px; background: #f5f5f5; display: flex; align-items: center; justify-content: space-between; padding: 0 18px 0 18px; font-size: 41.500px; line-height: 54px; color: #55565a; white-space: nowrap; }
.sel i { border: 9.500px solid transparent; border-top: 14px solid #6f7073; border-bottom: 0; }
.s1 { width: 294px; }
.s2 { width: 259px; margin-left: 18px; padding-left: 16px; }
.small { font-size: 33px; padding-left: 18px; }
.pct { margin-left: 17px; font-size: 44px; line-height: 60px; letter-spacing: -.8px; }
.pct.red { letter-spacing: -1.400px; }
.pct.green { letter-spacing: .1px; }
.help { margin-left: auto; margin-right: 38px; margin-top: -1px; }
.panel.last .bar { border-bottom: 2px solid #efefef; box-sizing: border-box; }
.peek { display: block; }

.nav { height: 154px; border-top: 2px solid #e6e6e6; display: flex; }
.index { box-sizing: border-box; width: 315px; height: 128px; margin-top: 18px; border-right: 1px solid #e6e6e6; display: flex; flex-direction: column; align-items: center; }
.index i { margin-top: -4px; border: 7px solid transparent; border-bottom: 11px solid #ababab; border-top: 0; }
.index b { font-size: 51px; line-height: 56px; margin-top: 18px; letter-spacing: -1.400px; color: #d93a30; }
.index span { font-size: 35px; line-height: 44px; margin-top: 2px; white-space: nowrap; }
.index em { font-size: 37px; letter-spacing: -.4px; color: #d93a30; }
.item { display: flex; flex-direction: column; align-items: center; padding-top: 21px; width: 220px; }
.item span { font-size: 41.500px; line-height: 60px; margin-top: 4px; color: #8b8c90; white-space: nowrap; }
.n1 { margin-left: 45px; }
.n2 { width: 224px; }
.n3 { width: 196px; }
.n4 { width: 224px; }
.home { width: 504px; height: 15px; border-radius: 8px; background: #c1c1c1; margin: 36px 0 0 378px; }
</style>
